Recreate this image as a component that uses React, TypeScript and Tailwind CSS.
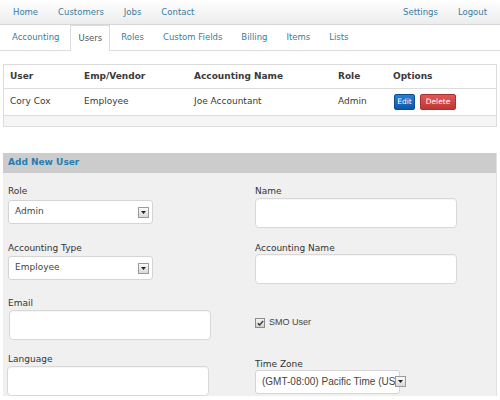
import React from 'react'

const font = { fontFamily: '"DejaVu Sans", Verdana, sans-serif' }

const navLeft = ['Home', 'Customers', 'Jobs', 'Contact']
const navRight = ['Settings', 'Logout']
const tabs = ['Accounting', 'Users', 'Roles', 'Custom Fields', 'Billing', 'Items', 'Lists']

const Arrow: React.FC = () => (
  <span className="flex h-[11px] w-[11px] shrink-0 items-center justify-center border border-[#9a9a9a] bg-gradient-to-b from-[#fafafa] to-[#d8d8d8]">
    <svg width="5" height="3" viewBox="0 0 5 3">
      <path d="M0 0h5L2.5 3z" fill="#222" />
    </svg>
  </span>
)

const Select: React.FC<{ value: string; className?: string; arial?: boolean }> = ({ value, className, arial }) => (
  <div className={`flex h-[24px] items-center justify-between rounded-[3px] border border-[#d4d4d4] bg-white pl-[6px] pr-[3px] ${className ?? ''}`}>
    <span
      className={`whitespace-nowrap text-[#444] ${arial ? 'text-[10px]' : 'text-[9px]'}`}
      style={arial ? { fontFamily: '"Liberation Sans", Arial, sans-serif' } : undefined}
    >
      {value}
    </span>
    <Arrow />
  </div>
)

const Input: React.FC<{ className?: string }> = ({ className }) => (
  <div className={`h-[30px] w-[202px] rounded-[4px] border border-[#d8d8d8] bg-white shadow-[inset_0_1px_1px_rgba(0,0,0,0.04)] ${className ?? ''}`} />
)

const Label: React.FC<{ children: React.ReactNode }> = ({ children }) => (
  <div className="h-[12px] text-[9px] leading-[12px] text-[#333]">{children}</div>
)

export default function App() {
  return (
    <div className="h-[400px] w-[500px] overflow-hidden bg-white" style={font}>
      <div className="flex h-[25px] items-center justify-between border-b border-[#d6d6d6] bg-gradient-to-b from-white to-[#ececec] px-[3px] text-[8.5px] text-[#3a7d9e]">
        <div className="flex">
          {navLeft.map((n) => (
            <span key={n} className="px-[10px]">{n}</span>
          ))}
        </div>
        <div className="flex">
          {navRight.map((n) => (
            <span key={n} className="px-[10px]">{n}</span>
          ))}
        </div>
      </div>

      <div className="flex h-[26px] items-end border-b border-[#dcdcdc] pl-[4px] text-[8.5px] text-[#3a7d9e]">
        {tabs.map((t) =>
          t === 'Users' ? (
            <span key={t} className="relative top-[1px] mr-[3px] flex h-[26px] items-center border border-b-0 border-[#dcdcdc] bg-white px-[7px] text-[#555]">
              {t}
            </span>
          ) : (
            <span key={t} className="mr-[3px] flex h-[25px] items-center px-[8px]">{t}</span>
          )
        )}
      </div>

      <div className="mx-[3px] mt-[13px] w-[494px] border border-[#dcdcdc] text-[9px] text-[#3a3a3a]">
        <div className="flex h-[24px] items-center border-b border-[#dcdcdc] font-bold">
          <span className="w-[74px] pl-[6px]">User</span>
          <span className="w-[110px] pl-[6px]">Emp/Vendor</span>
          <span className="w-[144px] pl-[6px]">Accounting Name</span>
          <span className="w-[55px] pl-[6px]">Role</span>
          <span className="pl-[6px]">Options</span>
        </div>
        <div className="flex h-[27px] items-center border-b border-[#dcdcdc]">
          <span className="w-[74px] pl-[6px]">Cory Cox</span>
          <span className="w-[110px] pl-[6px]">Employee</span>
          <span className="w-[144px] pl-[6px]">Joe Accountant</span>
          <span className="w-[55px] pl-[6px]">Admin</span>
          <span className="flex gap-[5px] pl-[7px] text-[7.5px] text-white">
            <span className="flex h-[16px] w-[21px] items-center justify-center rounded-[2px] border border-[#0b4e8f] bg-gradient-to-b from-[#2a7fd4] to-[#0b58a8]">Edit</span>
            <span className="flex h-[16px] w-[36px] items-center justify-center rounded-[2px] border border-[#a83230] bg-gradient-to-b from-[#e05855] to-[#c23532]">Delete</span>
          </span>
        </div>
        <div className="h-[10px] bg-[#f5f5f5]" />
      </div>

      <div className="mx-[3px] mt-[26px] w-[494px] border-r border-[#e2e2e2] bg-[#f0f0f0]">
        <div className="flex h-[20px] items-center bg-[#cccccc] pl-[5px] text-[9px] font-bold text-[#1f7fb3]">Add New User</div>
        <div className="flex pt-[12px]">
          <div className="flex w-[252px] flex-col pl-[5px]">
            <Label>Role</Label>
            <Select value="Admin" className="mt-[3px] w-[145px]" />
            <div className="mt-[18px]">
              <Label>Accounting Type</Label>
            </div>
            <Select value="Employee" className="mt-[2px] w-[145px]" />
            <div className="mt-[17px]">
              <Label>Email</Label>
            </div>
            <Input className="mt-[1px] ml-[1px]" />
            <div className="mt-[13px]">
              <Label>Language</Label>
            </div>
            <Input className="mt-[1px] -ml-[1px]" />
          </div>
          <div className="flex flex-col">
            <Label>Name</Label>
            <Input className="mt-[1px]" />
            <div className="mt-[14px]">
              <Label>Accounting Name</Label>
            </div>
            <Input />
            <div className="mt-[32px] flex items-center gap-[4px] text-[9px] text-[#444]" style={{ fontFamily: '"Liberation Sans", Arial, sans-serif' }}>
              <span className="flex h-[10px] w-[10px] items-center justify-center border border-[#8a8a8a] bg-gradient-to-b from-[#f4f4f4] to-[#d0d0d0]">
                <svg width="7" height="6" viewBox="0 0 7 6">
                  <path d="M0.8 3.2L2.6 5L6.2 0.8" stroke="#333" strokeWidth="1.3" fill="none" />
                </svg>
              </span>
              <span>SMO User</span>
            </div>
            <div className="mt-[28px]">
              <Label>Time Zone</Label>
            </div>
            <Select value="(GMT-08:00) Pacific Time (US" arial className="w-[145px] pr-[2px]" />
          </div>
        </div>
      </div>
    </div>
  )
}
